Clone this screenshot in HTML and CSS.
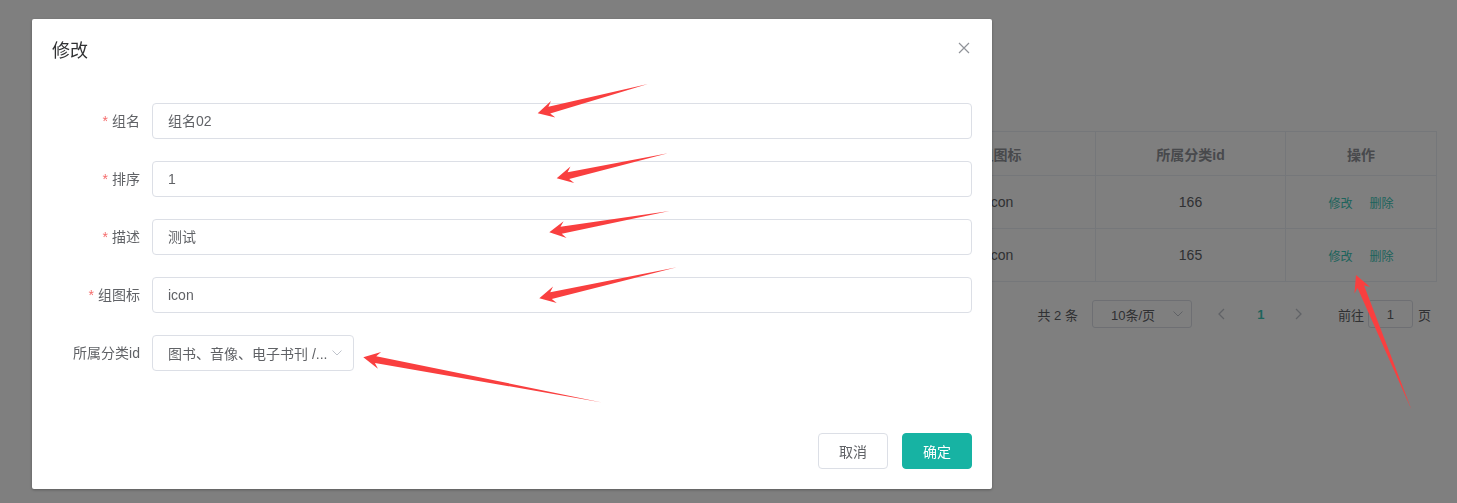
FILE: index.html
```html
<!DOCTYPE html>
<html lang="zh-CN">
<head>
<meta charset="utf-8">
<title>修改</title>
<link rel="stylesheet" href="styles.css">
</head>
<body>
<div class="page">
  <table class="grid">
    <colgroup>
      <col class="c-id"><col class="c-wide"><col class="c-wide"><col class="c-wide"><col class="c-mid"><col class="c-mid"><col class="c-op">
    </colgroup>
    <thead>
      <tr><th>组id</th><th>组名</th><th>排序</th><th>描述</th><th>组图标</th><th>所属分类id</th><th>操作</th></tr>
    </thead>
    <tbody>
      <tr><td>3</td><td>组名01</td><td>0</td><td>测试</td><td>icon</td><td>166</td><td><span class="link">修改</span><span class="link gap">删除</span></td></tr>
      <tr><td>4</td><td>组名02</td><td>1</td><td>测试</td><td>icon</td><td>165</td><td><span class="link">修改</span><span class="link gap">删除</span></td></tr>
    </tbody>
  </table>
  <div class="pager">
    <span class="total">共 2 条</span>
    <span class="sizes">10条/页<svg class="chev" width="10" height="6" viewBox="0 0 10 6"><path d="M0.5 0.5 L5 5 L9.5 0.5" fill="none" stroke="#c0c4cc" stroke-width="1"/></svg></span>
    <span class="pbtn prev"><svg width="7" height="12" viewBox="0 0 7 12"><path d="M6 1 L1 6 L6 11" fill="none" stroke="#c0c4cc" stroke-width="1.3"/></svg></span>
    <span class="pnum">1</span>
    <span class="pbtn next"><svg width="7" height="12" viewBox="0 0 7 12"><path d="M1 1 L6 6 L1 11" fill="none" stroke="#c0c4cc" stroke-width="1.3"/></svg></span>
    <span class="jump">前往</span>
    <span class="jump-input">1</span>
    <span class="jump-unit">页</span>
  </div>
</div>

<div class="overlay">
  <div class="dialog">
    <div class="dlg-header">
      <span class="dlg-title">修改</span>
      <span class="dlg-close"><svg width="16" height="16" viewBox="0 0 16 16"><path d="M3 3 L13 13 M13 3 L3 13" stroke="#909399" stroke-width="1.2" fill="none"/></svg></span>
    </div>
    <div class="dlg-body">
      <div class="item"><label class="lbl"><span class="req">*</span>组名</label><div class="input">组名02</div></div>
      <div class="item"><label class="lbl"><span class="req">*</span>排序</label><div class="input">1</div></div>
      <div class="item"><label class="lbl"><span class="req">*</span>描述</label><div class="input">测试</div></div>
      <div class="item"><label class="lbl"><span class="req">*</span>组图标</label><div class="input">icon</div></div>
      <div class="item"><label class="lbl">所属分类id</label><div class="select"><span class="sel-text">图书、音像、电子书刊 /...</span><svg class="sel-chev" width="10" height="6" viewBox="0 0 10 6"><path d="M0.5 0.5 L5 5 L9.5 0.5" fill="none" stroke="#c0c4cc" stroke-width="1"/></svg></div></div>
    </div>
    <div class="dlg-footer">
      <button class="btn">取消</button>
      <button class="btn primary">确定</button>
    </div>
  </div>
</div>

<svg class="marks" width="1457" height="503" viewBox="0 0 1457 503">
  <g fill="#f93f3f">
    <polygon transform="translate(537.7 113.3) rotate(-14.9)" points="0,0 16,-8.5 12,-3.5 114,0 12,3.5 16,8.5"/>
    <polygon transform="translate(556.7 178.3) rotate(-12.7)" points="0,0 16,-8.5 12,-3.5 114,0 12,3.5 16,8.5"/>
    <polygon transform="translate(549.3 232.3) rotate(-10)" points="0,0 16,-8.5 12,-3.5 122,0 12,3.5 16,8.5"/>
    <polygon transform="translate(539.3 298.3) rotate(-12.7)" points="0,0 16,-8.5 12,-3.5 141,0 12,3.5 16,8.5"/>
    <polygon transform="translate(363.3 357.3) rotate(10.7)" points="0,0 16.5,-8.5 12.5,-3.5 243,0 12.5,3.5 16.5,8.5"/>
    <polygon transform="translate(1356 275) rotate(67.6)" points="0,0 16.5,-8.5 12.5,-3.5 146,0 12.5,3.5 16.5,8.5"/>
  </g>
</svg>
</body>
</html>
```

FILE: styles.css
```css
* { box-sizing: border-box; }
html, body { margin: 0; padding: 0; }
body {
  width: 1457px;
  height: 503px;
  overflow: hidden;
  background: #fff;
  font-family: "Liberation Sans", "Noto Sans CJK SC", sans-serif;
  font-size: 14px;
  color: #606266;
}

/* background page */
.page {
  padding: 131px 21px 0 40px;
}
.grid {
  width: 1396px;
  table-layout: fixed;
  border-collapse: collapse;
  border: 1px solid #ebeef5;
}
.c-id { width: 100px; }
.c-wide { width: 255px; }
.c-mid { width: 190px; }
.c-op { width: 151px; }
.grid th, .grid td {
  border: 1px solid #ebeef5;
  text-align: center;
  padding: 0;
  white-space: nowrap;
}
.grid th {
  height: 44px;
  font-weight: bold;
  color: #909399;
}
.grid td {
  height: 53px;
  color: #606266;
}
.link {
  font-size: 12px;
  color: #3cc8b8;
}
.link.gap { margin-left: 17px; }

.pager {
  display: flex;
  justify-content: flex-end;
  align-items: center;
  height: 28px;
  margin-top: 18px;
  padding-right: 5px;
  font-size: 13px;
  color: #606266;
}
.total { margin-right: 14px; }
.sizes {
  width: 100px;
  height: 28px;
  border: 1px solid #dcdfe6;
  border-radius: 3px;
  display: flex;
  align-items: center;
  padding-left: 18px;
  padding-right: 8px;
  justify-content: space-between;
  margin-right: 15px;
}
.pbtn {
  width: 30px;
  height: 28px;
  display: flex;
  align-items: center;
  justify-content: center;
}
.pnum {
  width: 36px;
  margin: 0 5px 0 6px;
  text-align: center;
  font-weight: bold;
  color: #3cc8b8;
}
.jump { margin-left: 24px; }
.jump-input {
  width: 45px;
  height: 28px;
  margin-left: 4px;
  border: 1px solid #dcdfe6;
  border-radius: 3px;
  display: flex;
  align-items: center;
  justify-content: center;
}
.jump-unit { margin-left: 5px; }

/* overlay + dialog */
.overlay {
  position: fixed;
  inset: 0;
  background: rgba(0, 0, 0, 0.5);
  padding: 19px 0 0 32px;
}
.dialog {
  width: 960px;
  background: #fff;
  border-radius: 2px;
  box-shadow: 0 1px 3px rgba(0, 0, 0, 0.3);
}
.dlg-header {
  display: flex;
  justify-content: space-between;
  align-items: flex-start;
  padding: 20px 20px 10px;
}
.dlg-title {
  font-size: 18px;
  line-height: 24px;
  color: #303133;
}
.dlg-close {
  width: 16px;
  height: 16px;
  margin-top: 1px;
  display: block;
}
.dlg-close svg { display: block; }
.dlg-body {
  padding: 30px 20px;
}
.item {
  display: flex;
  margin-bottom: 22px;
}
.lbl {
  width: 100px;
  flex: none;
  padding-right: 12px;
  text-align: right;
  line-height: 36px;
  color: #606266;
  white-space: nowrap;
}
.req {
  color: #f56c6c;
  margin-right: 4px;
}
.input {
  flex: 1;
  height: 36px;
  line-height: 34px;
  border: 1px solid #dcdfe6;
  border-radius: 4px;
  padding: 0 15px;
  color: #606266;
}
.select {
  width: 202px;
  height: 36px;
  border: 1px solid #dcdfe6;
  border-radius: 4px;
  padding: 0 11px 0 15px;
  display: flex;
  align-items: center;
}
.sel-text {
  flex: 1;
  min-width: 0;
  white-space: nowrap;
  color: #606266;
}
.sel-chev { flex: none; display: block; }
.dlg-footer {
  display: flex;
  justify-content: flex-end;
  padding: 10px 20px 20px;
}
.btn {
  height: 36px;
  width: 70px;
  padding: 0;
  border: 1px solid #dcdfe6;
  border-radius: 4px;
  background: #fff;
  font-family: inherit;
  font-size: 14px;
  color: #606266;
}
.btn.primary {
  margin-left: 14px;
  background: #17b3a3;
  border-color: #17b3a3;
  color: #fff;
}

.marks {
  position: fixed;
  left: 0;
  top: 0;
  pointer-events: none;
}
```
